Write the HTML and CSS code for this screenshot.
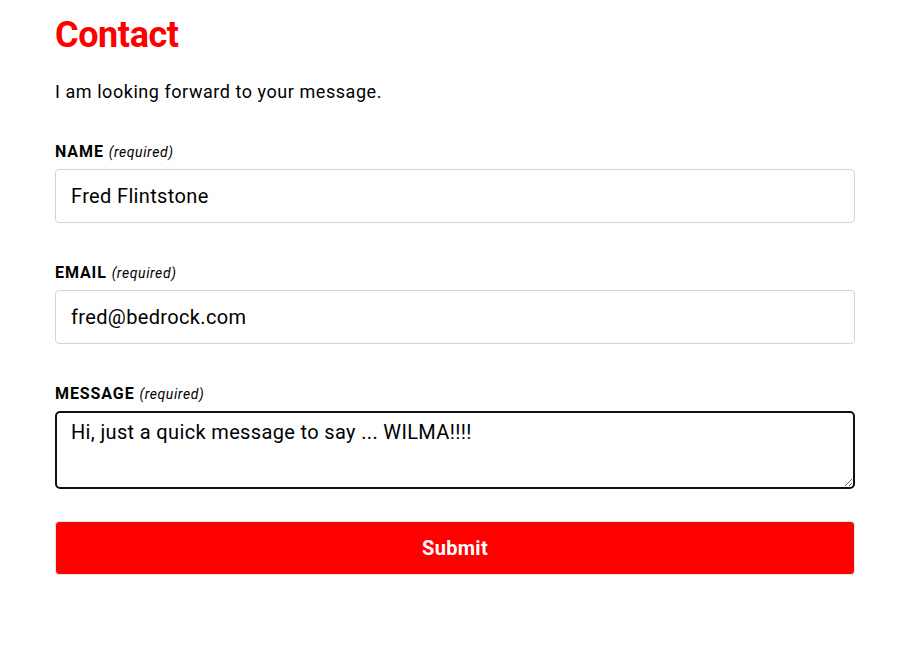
FILE: index.html
```html
<!DOCTYPE html>
<html lang="en">
<head>
<meta charset="utf-8">
<title>Contact</title>
<link rel="stylesheet" href="styles.css">
</head>
<body>
<main class="page">
  <h1 class="title">Contact</h1>
  <p class="intro">I am looking forward to your message.</p>
  <form class="form">
    <div class="field">
      <label class="label" for="name">NAME <span class="req">(required)</span></label>
      <input class="input" id="name" type="text" value="Fred Flintstone">
    </div>
    <div class="field">
      <label class="label" for="email">EMAIL <span class="req">(required)</span></label>
      <input class="input" id="email" type="email" value="fred@bedrock.com">
    </div>
    <div class="field field-last">
      <label class="label" for="msg">MESSAGE <span class="req">(required)</span></label>
      <textarea class="textarea" id="msg">Hi, just a quick message to say ... WILMA!!!!</textarea>
    </div>
    <button class="submit" type="button">Submit</button>
  </form>
</main>
</body>
</html>
```
FILE: styles.css
```css
* { box-sizing: border-box; }
html, body { margin: 0; padding: 0; background: #fff; }
body {
  font-family: Roboto, "Liberation Sans", Arial, sans-serif;
  color: #000;
}
.page {
  width: 800px;
  margin-left: 55px;
  padding-top: 14px;
}
.title {
  margin: 0;
  font-size: 36px;
  line-height: 1.2;
  font-weight: 700;
  letter-spacing: -0.4px;
  color: #ff0000;
}
.intro {
  margin: 21px 0 0;
  font-size: 18px;
  line-height: 1.5;
  letter-spacing: 0.55px;
}
.form {
  margin-top: 35px;
  display: flex;
  flex-direction: column;
}
.field {
  display: flex;
  flex-direction: column;
  gap: 5px;
  margin-bottom: 38px;
}
.field-last { margin-bottom: 32px; }
.label {
  font-size: 16px;
  line-height: 24px;
  font-weight: 700;
  letter-spacing: 0.9px;
}
.req {
  font-size: 14px;
  font-weight: 400;
  font-style: italic;
  letter-spacing: 0.6px;
}
.input {
  width: 800px;
  height: 54px;
  border: 1px solid #d4d4d4;
  border-radius: 4px;
  padding: 0 15px;
  font-family: inherit;
  font-size: 20px;
  letter-spacing: 0.35px;
  color: #000;
  background: #fff;
}
.textarea {
  width: 800px;
  height: 78px;
  border: 2px solid #111;
  border-radius: 5px;
  padding: 7px 14px;
  font-family: inherit;
  font-size: 20px;
  letter-spacing: 0.35px;
  line-height: normal;
  color: #000;
  background: #fff;
  outline: none;
  resize: vertical;
}
.submit {
  width: 800px;
  height: 54px;
  border: 1px solid #e6e6e6;
  border-radius: 4px;
  background: #ff0000;
  color: #fff;
  font-family: inherit;
  font-size: 20px;
  font-weight: 700;
  letter-spacing: 0.3px;
  cursor: pointer;
}
```
